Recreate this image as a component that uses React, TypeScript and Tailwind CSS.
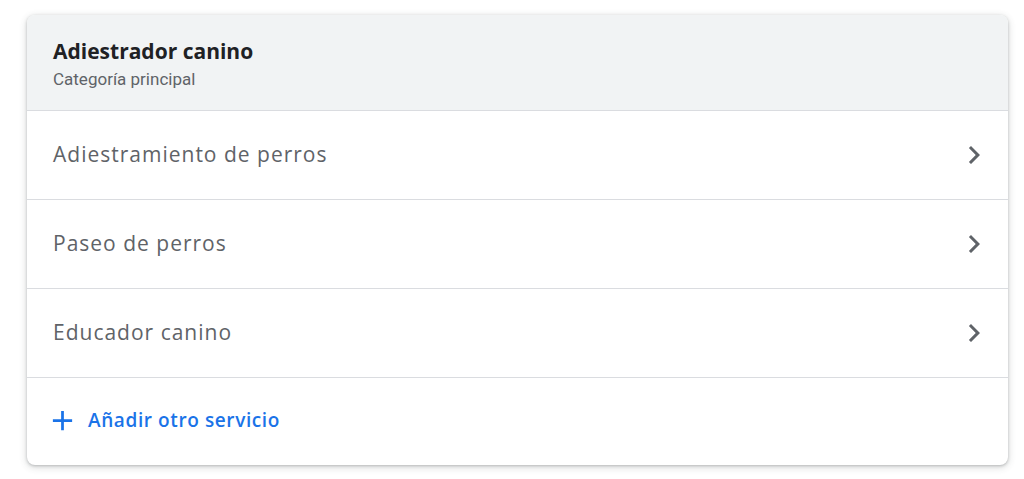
import React from "react";

const Chevron = () => (
  <svg width="36" height="36" viewBox="0 0 24 24" fill="#5f6368">
    <path d="M10 6L8.59 7.41 13.17 12l-4.58 4.59L10 18l6-6z" />
  </svg>
);

const Row = ({ label }: { label: string }) => (
  <div className="flex h-[89px] items-center justify-between border-t border-[#dadce0] pl-[26px] pr-[16px]">
    <span className="text-[21px] font-medium tracking-[1px] text-[#5f6368]" style={{ fontFamily: "'Open Sans', sans-serif" }}>{label}</span>
    <Chevron />
  </div>
);

export default function App() {
  return (
    <div className="min-h-[479px] bg-white pt-[15px] pl-[27px]" style={{ fontFamily: "Roboto, 'Noto Sans', sans-serif" }}>
      <div className="w-[981px] overflow-hidden rounded-[8px] bg-white shadow-[0_1px_3px_rgba(60,64,67,0.3),0_2px_6px_2px_rgba(60,64,67,0.12)]">
        <div className="flex h-[95px] flex-col justify-center bg-[#f1f3f4] pl-[26px] pt-[2px]">
          <div className="text-[21px] font-bold leading-[28px] text-[#202124]" style={{ fontFamily: "'Open Sans', sans-serif" }}>Adiestrador canino</div>
          <div className="text-[17px] leading-[22px] text-[#5f6368] mt-[3px]">Categoría principal</div>
        </div>
        <Row label="Adiestramiento de perros" />
        <Row label="Paseo de perros" />
        <Row label="Educador canino" />
        <div className="flex h-[88px] items-center border-t border-[#dadce0] pl-[19px] pb-[3px]">
          <svg width="33" height="33" viewBox="0 0 24 24" fill="#1a73e8">
            <path d="M19 13h-6v6h-2v-6H5v-2h6V5h2v6h6v2z" />
          </svg>
          <span className="ml-[9px] text-[19px] font-semibold tracking-[0.6px] text-[#1a73e8]" style={{ fontFamily: "'Open Sans', sans-serif" }}>Añadir otro servicio</span>
        </div>
      </div>
    </div>
  );
}
